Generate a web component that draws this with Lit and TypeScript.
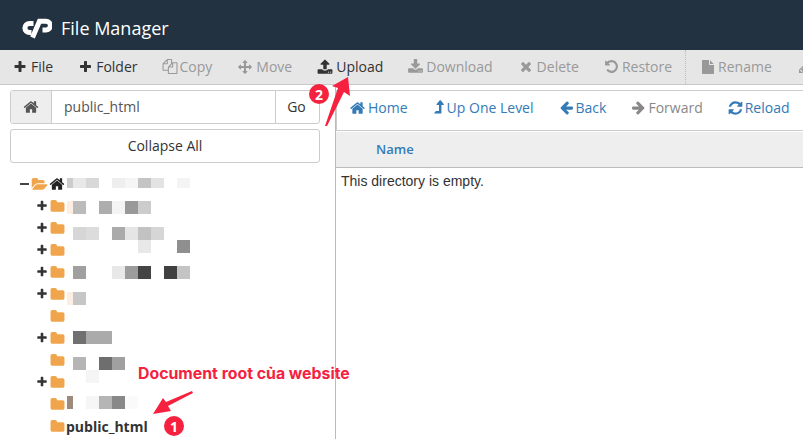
import { LitElement, html, css, svg } from "lit";
import { customElement } from "lit/decorators.js";

const P: Record<string, [string, number]> = {
  plus: ["M1600 736v192q0 40-28 68t-68 28h-416v416q0 40-28 68t-68 28h-192q-40 0-68-28t-28-68v-416h-416q-40 0-68-28t-28-68v-192q0-40 28-68t68-28h416v-416q0-40 28-68t68-28h192q40 0 68 28t28 68v416h416q40 0 68 28t28 68z", 1792],
  home: ["M1472 992v480q0 26-19 45t-45 19h-384v-384h-256v384h-384q-26 0-45-19t-19-45v-480q0-1 .5-3t.5-3l575-474 575 474q1 2 1 6zm223-69l-62 74q-8 9-21 11h-3q-13 0-21-7l-692-577-692 577q-12 8-24 7-13-2-21-11l-62-74q-8-10-7-23.5t11-21.5l719-599q32-26 76-26t76 26l244 204v-195q0-14 9-23t23-9h192q14 0 23 9t9 23v408l219 182q10 8 11 21.5t-7 23.5z", 1792],
  folder: ["M1728 608v704q0 92-66 158t-158 66h-1216q-92 0-158-66t-66-158v-960q0-92 66-158t158-66h320q92 0 158 66t66 158v32h672q92 0 158 66t66 158z", 1792],
  open: ["M1845 931q0 35-35 73l-336 396q-43 51-120.5 86.5t-143.5 35.5h-1088q-34 0-60.5-13t-26.5-43q0-35 35-73l336-396q43-51 120.5-86.5t143.5-35.5h1088q34 0 60.5 13t26.5 43zm-343-344v160h-832q-94 0-197 47.5t-164 119.5l-337 396-5 6q0-4-.5-12.5t-.5-12.5v-960q0-92 66-158t158-66h320q92 0 158 66t66 158v32h544q92 0 158 66t66 158z", 1920],
  left: ["M1664 896v128q0 53-32.5 90.5t-84.5 37.5h-704l293 294q38 36 38 90t-38 90l-75 76q-37 37-90 37-52 0-91-37l-651-652q-37-37-37-90 0-52 37-91l651-650q38-38 91-38 52 0 90 38l75 74q38 38 38 91t-38 91l-293 293h704q52 0 84.5 37.5t32.5 90.5z", 1792],
  right: ["M1600 960q0 54-37 91l-651 651q-39 37-91 37-51 0-90-37l-75-75q-38-38-38-91t38-91l293-293h-704q-52 0-84.5-37.5t-32.5-90.5v-128q0-53 32.5-90.5t84.5-37.5h704l-293-294q-38-36-38-90t38-90l75-75q38-38 90-38 53 0 91 38l651 651q37 35 37 90z", 1792],
  refresh: ["M1639 1056q0 5-1 7-64 268-268 434.5t-478 166.5q-146 0-282.5-55t-243.5-157l-129 129q-19 19-45 19t-45-19-19-45v-448q0-26 19-45t45-19h448q26 0 45 19t19 45-19 45l-137 137q71 66 161 102t187 36q134 0 250-65t186-179q11-17 53-117 8-23 30-23h192q13 0 22.5 9.5t9.5 22.5zm25-800v448q0 26-19 45t-45 19h-448q-26 0-45-19t-19-45 19-45l138-138q-148-137-349-137-134 0-250 65t-186 179q-11 17-53 117-8 23-30 23h-199q-13 0-22.5-9.5t-9.5-22.5v-7q65-268 270-434.5t480-166.5q146 0 284 55.5t245 156.5l130-129q19-19 45-19t45 19 19 45z", 1792],
  times: ["M1490 1322q0 40-28 68l-136 136q-28 28-68 28t-68-28l-294-294-294 294q-28 28-68 28t-68-28l-136-136q-28-28-28-68t28-68l294-294-294-294q-28-28-28-68t28-68l136-136q28-28 68-28t68 28l294 294 294-294q28-28 68-28t68 28l136 136q28 28 28 68t-28 68l-294 294 294 294q28 28 28 68z", 1792],
  undo: ["M1664 896q0 156-61 298t-164 245-245 164-298 61q-172 0-327-72.5t-264-204.5q-7-10-6.5-22.5t8.5-20.5l137-138q10-9 25-9 16 2 23 12 73 95 179 147t225 52q104 0 198.5-40.5t163.5-109.5 109.5-163.5 40.5-198.5-40.5-198.5-109.5-163.5-163.5-109.5-198.5-40.5q-98 0-188 35.5t-160 101.5l137 138q31 30 14 69-17 40-59 40h-448q-26 0-45-19t-19-45v-448q0-42 40-59 39-17 69 14l130 129q107-101 244.5-156.5t284.5-55.5q156 0 298 61t245 164 164 245 61 298z", 1792],
  upload: ["M1344 1472q0-26-19-45t-45-19-45 19-19 45 19 45 45 19 45-19 19-45zm256 0q0-26-19-45t-45-19-45 19-19 45 19 45 45 19 45-19 19-45zm128-224v320q0 40-28 68t-68 28h-1472q-40 0-68-28t-28-68v-320q0-40 28-68t68-28h427q21 56 70.5 92t110.5 36h256q61 0 110.5-36t70.5-92h427q40 0 68 28t28 68zm-325-648q-17 40-59 40h-256v448q0 26-19 45t-45 19h-256q-26 0-45-19t-19-45v-448h-256q-42 0-59-40-17-39 14-69l448-448q18-19 45-19t45 19l448 448q31 30 14 69z", 1792],
  download: ["M1344 1344q0-26-19-45t-45-19-45 19-19 45 19 45 45 19 45-19 19-45zm256 0q0-26-19-45t-45-19-45 19-19 45 19 45 45 19 45-19 19-45zm128-224v320q0 40-28 68t-68 28h-1472q-40 0-68-28t-28-68v-320q0-40 28-68t68-28h465l135 136q58 56 136 56t136-56l136-136h464q40 0 68 28t28 68zm-325-569q17 41-14 70l-448 448q-18 19-45 19t-45-19l-448-448q-31-29-14-70 17-39 59-39h256v-448q0-26 19-45t45-19h256q26 0 45 19t19 45v448h256q42 0 59 39z", 1792],
  file: ["M1152 512v-472q22 14 36 28l408 408q14 14 28 36h-472zm-128 32q0 40 28 68t68 28h544v1056q0 40-28 68t-68 28h-1344q-40 0-68-28t-28-68v-1600q0-40 28-68t68-28h800v544z", 1792],
  copy: ["M1696 384q40 0 68 28t28 68v1216q0 40-28 68t-68 28h-960q-40 0-68-28t-28-68v-288h-544q-40 0-68-28t-28-68v-672q0-40 20-88t48-76l408-408q28-28 76-48t88-20h416q40 0 68 28t28 68v328q68-40 128-40h416zm-544 213l-299 299h299v-299zm-640-384l-299 299h299v-299zm196 647l316-316v-416h-384v416q0 40-28 68t-68 28h-416v640h512v-256q0-40 20-88t48-76zm956 804v-1152h-384v416q0 40-28 68t-68 28h-416v640h896z", 1792],
  arrows: ["M1792 896q0 26-19 45l-256 256q-19 19-45 19t-45-19-19-45v-128h-384v384h128q26 0 45 19t19 45-19 45l-256 256q-19 19-45 19t-45-19l-256-256q-19-19-19-45t19-45 45-19h128v-384h-384v128q0 26-19 45t-45 19-45-19l-256-256q-19-19-19-45t19-45l256-256q19-19 45-19t45 19 19 45v128h384v-384h-128q-26 0-45-19t-19-45 19-45l256-256q19-19 45-19t45 19l256 256q19 19 19 45t-19 45-45 19h-128v384h384v-128q0-26 19-45t45-19 45 19l256 256q19 19 19 45z", 1792],
  up: ["M1402 595q-18 37-58 37h-192v864q0 14-9 23t-23 9h-704q-21 0-29-18-8-20 4-35l160-192q9-11 25-11h320v-640h-192q-40 0-58-37-17-37 9-68l320-384q18-22 49-22t49 22l320 384q27 32 9 68z", 1792],
  pencil: ["M491 1536l91-91-235-235-91 91v107h128v128h107zm523-928q0-22-22-22-10 0-17 7l-542 542q-7 7-7 17 0 22 22 22 10 0 17-7l542-542q7-7 7-17zm-54-192l416 416-832 832h-416v-416zm683 96q0 53-37 90l-166 166-416-416 166-165q36-38 90-38 53 0 91 38l235 234q37 39 37 91z", 1792],
};

/** Draws a glyph at `size`, in a layout box `box` px wide; the glyph stays centred and may overhang. */
const ic = (n: string, size = 14, box?: number) => {
  const [d, w] = P[n];
  const bw = box ?? size * (w / 1792);
  const vbw = (bw * 1792) / size;
  return html`<svg class="ic" width=${bw} height=${size} viewBox="${(w - vbw) / 2} 0 ${vbw} 1792" fill="currentColor"><path d=${d}></path></svg>`;
};

type Tool = [string, string, boolean, number, number];
const tools: Tool[] = [
  ["plus", "File", true, 14, 14],
  ["plus", "Folder", true, 14, 13],
  ["copy", "Copy", false, 15, 12],
  ["arrows", "Move", false, 14, 14],
  ["upload", "Upload", true, 16, 14],
  ["download", "Download", false, 16, 13],
  ["times", "Delete", false, 15, 14],
  ["undo", "Restore", false, 15, 13],
];

// Redaction mosaic: [x, y, width, height, colour] — its place on the page is the content itself.
const mosaic: [number, number, number, number, string][] = [
  [67,178,6,10,"#ccc"],[73,178,13,10,"#e8e8e8"],[86,178,13,10,"#d8d8d8"],[112,178,13,10,"#eee"],[125,178,13,10,"#f5f5f5"],[138,178,13,10,"#c4c4c4"],[151,178,13,10,"#e3e3e3"],[177,178,13,10,"#f4f4f4"],
  [67,201,6,13,"#fdeee4"],[73,201,13,13,"#bbb"],[99,201,13,13,"#adadad"],[112,201,13,13,"#f4f4f4"],[125,201,13,13,"#999"],[138,201,13,13,"#ccc"],
  [73,227,13,13,"#d6d6d6"],[86,227,13,13,"#dcdcdc"],[112,227,13,13,"#aaa"],[125,227,13,13,"#e5e5e5"],[138,227,13,13,"#c2c2c2"],[151,227,13,13,"#d6d6d6"],
  [138,240,13,13,"#e8e8e8"],[177,240,13,13,"#8f8f8f"],
  [73,266,13,13,"#a0a0a0"],[112,266,13,13,"#e8e8e8"],[125,266,13,13,"#9c9c9c"],[138,266,13,13,"#444"],[164,266,13,13,"#404040"],[177,266,13,13,"#c4c4c4"],
  [67,292,6,13,"#fdeee4"],[73,292,13,13,"#c6c6c6"],
  [73,331,13,13,"#707070"],[86,331,13,13,"#aaa"],[99,331,13,13,"#aaa"],
  [73,357,13,13,"#b5b5b5"],[99,357,13,13,"#6e6e6e"],[112,357,13,13,"#a0a0a0"],
  [86,370,13,13,"#f5f5f5"],
  [67,396,6,13,"#9c8b7c"],[86,396,13,13,"#f6f6f6"],[99,396,13,13,"#b5b5b5"],[112,396,13,13,"#888"],[125,396,13,13,"#fafafa"],
];

const rows = [true, true, true, true, true, false, true, false, true, false, false];

@customElement("app-root")
export class AppRoot extends LitElement {
  static styles = css`
    :host { display: block; width: 803px; height: 439px; overflow: hidden; position: relative; background: #fff; font-family: "Open Sans", sans-serif; font-size: 14px; color: #333; }
    .ic { display: block; flex: none; overflow: visible; }
    .top { height: 50px; background: #233240; display: flex; align-items: center; padding: 6px 0 0 21px; box-sizing: border-box; gap: 9px; color: #fff; font-size: 18px; }
    .bar { height: 35px; box-sizing: border-box; background: #e6e6e6; border-bottom: 1px solid #c9c9c9; display: flex; align-items: center; white-space: nowrap; overflow: hidden; }
    .tool { display: flex; align-items: center; gap: 4px; padding: 0 13px 1px; box-sizing: border-box; color: #333; height: 100%; flex: none; }
    .tool.off { color: #999; }
    .tool.rename { padding-left: 16px; }
    .sep { width: 0; height: 100%; border-left: 1px dotted #bbb; flex: none; }
    .main { display: flex; height: 354px; }
    .side { width: 336px; box-sizing: border-box; border-right: 1px solid #bbb; padding: 5px 15px 0 10px; flex: none; }
    .path { display: flex; height: 34px; box-sizing: border-box; border: 1px solid #ccc; border-radius: 3px; }
    .homebtn { width: 40px; flex: none; background: #eee; border-right: 1px solid #ccc; color: #555; display: flex; align-items: center; justify-content: center; border-radius: 3px 0 0 3px; }
    .input { flex: 1; padding-left: 12px; line-height: 32px; color: #555; }
    .go { width: 44px; flex: none; border-left: 1px solid #ccc; display: flex; align-items: center; justify-content: center; padding: 0 2px 2px 0; box-sizing: border-box; }
    .collapse { margin-top: 5px; height: 34px; box-sizing: border-box; border: 1px solid #ccc; border-radius: 3px; display: flex; align-items: center; justify-content: center; padding-bottom: 2px; }
    .tree { margin: 10px 0 0 10px; }
    .row { height: 22px; display: flex; align-items: center; }
    .exp { width: 12px; margin-left: 16px; margin-right: 2px; color: #333; display: flex; justify-content: center; flex: none; }
    .fold { color: #f0a54c; flex: none; }
    .root .exp { margin-left: 0; width: 9px; margin-right: 3px; }
    .minus { width: 10px; height: 2px; background: #444; }
    .rooth { color: #222; margin-left: 1px; }
    .cur { font-weight: 700; color: #333; font-size: 14px; margin-left: 1px; }
    .content { flex: 1; min-width: 0; padding-top: 5px; display: flex; flex-direction: column; }
    .nav { height: 41px; box-sizing: border-box; border: 1px solid #ccc; border-right: none; display: flex; align-items: center; padding: 0 0 6px 0; white-space: nowrap; }
    .nl { display: flex; align-items: center; gap: 3px; color: #337ab7; padding: 0 13px; flex: none; }
    .nl.off { color: #888; }
    .thead { margin-top: 1px; height: 36px; box-sizing: border-box; background: #eee; border-bottom: 1px solid #bbb; display: flex; align-items: center; padding: 0 0 2px 40px; color: #337ab7; font-weight: 600; font-size: 13px; }
    .empty { font-family: "Liberation Sans", Arial, sans-serif; font-size: 14px; color: #333; padding: 4px 0 0 5px; line-height: 18px; }
    .mosaic { position: absolute; inset: 0; pointer-events: none; }
    .mosaic i { position: absolute; display: block; }
    .arrows { position: absolute; inset: 0; pointer-events: none; }
    .note { position: absolute; left: 138px; top: 364px; color: #f5213f; font-family: Inter, sans-serif; font-size: 15.85px; font-weight: 700; white-space: nowrap; }
    .badge { position: absolute; width: 20px; height: 20px; border-radius: 50%; background: #f5213f; color: #fff; font-size: 14px; font-weight: 700; display: flex; align-items: center; justify-content: center; }
    .b1 { left: 164px; top: 416px; }
    .b2 { left: 309px; top: 84px; }
  `;

  render() {
    return html`
      <div class="top">
        <svg width="31" height="21" viewBox="0 0 31 21" fill="none" stroke="#fff" stroke-width="5"><path d="M12.500 5.400H8.500a4.600 4.600 0 0 0 0 9.200H10.500"></path><path d="M11.500 19.500L18.500 3.200H25a4.400 4.400 0 0 1 0 8.800H21.500"></path></svg>
        <span>File Manager</span>
      </div>
      <div class="bar">
        ${tools.map(([i, t, on, s, b]) => html`<div class="tool ${on ? "" : "off"}">${ic(i, s, b)}<span>${t}</span></div>`)}
        <div class="sep"></div>
        <div class="tool off rename">${ic("file", 14, 12)}<span>Rename</span></div>
        <div class="tool off">${ic("pencil", 14)}</div>
      </div>
      <div class="main">
        <div class="side">
          <div class="path">
            <div class="homebtn">${ic("home", 16)}</div>
            <div class="input">public_html</div>
            <div class="go">Go</div>
          </div>
          <div class="collapse">Collapse All</div>
          <div class="tree">
            <div class="row root">
              <div class="exp"><div class="minus"></div></div>
              <div class="fold">${ic("open", 15)}</div>
              <div class="rooth">${ic("home", 16)}</div>
            </div>
            ${rows.map((plus, idx) => html`
              <div class="row">
                <div class="exp">${plus ? ic("plus", 12) : ""}</div>
                <div class="fold">${ic("folder", 15)}</div>
                ${idx === 10 ? html`<span class="cur">public_html</span>` : ""}
              </div>`)}
          </div>
        </div>
        <div class="content">
          <div class="nav">
            <div class="nl">${ic("home", 16, 15)}<span>Home</span></div>
            <div class="nl">${ic("up", 17, 10)}<span>Up One Level</span></div>
            <div class="nl">${ic("left", 15, 13)}<span>Back</span></div>
            <div class="nl off">${ic("right", 15, 13)}<span>Forward</span></div>
            <div class="nl">${ic("refresh", 16, 13)}<span>Reload</span></div>
          </div>
          <div class="thead">Name</div>
          <div class="empty">This directory is empty.</div>
        </div>
      </div>
      <div class="mosaic">
        ${mosaic.map(([x, y, w, h, c]) => html`<i style="left:${x}px;top:${y}px;width:${w}px;height:${h}px;background:${c}"></i>`)}
      </div>
      <svg class="arrows" width="803" height="439" viewBox="0 0 803 439" fill="#f5213f">
        ${svg`<path d="M325 126L338 88 332 86 348 77 350 96 344 92 327 126z"></path>`}
        ${svg`<path d="M193 393L168 406 171 411 153 414 163 398 166 402 192 391z"></path>`}
      </svg>
      <div class="note">Document root của website</div>
      <div class="badge b1">1</div>
      <div class="badge b2">2</div>
    `;
  }
}
